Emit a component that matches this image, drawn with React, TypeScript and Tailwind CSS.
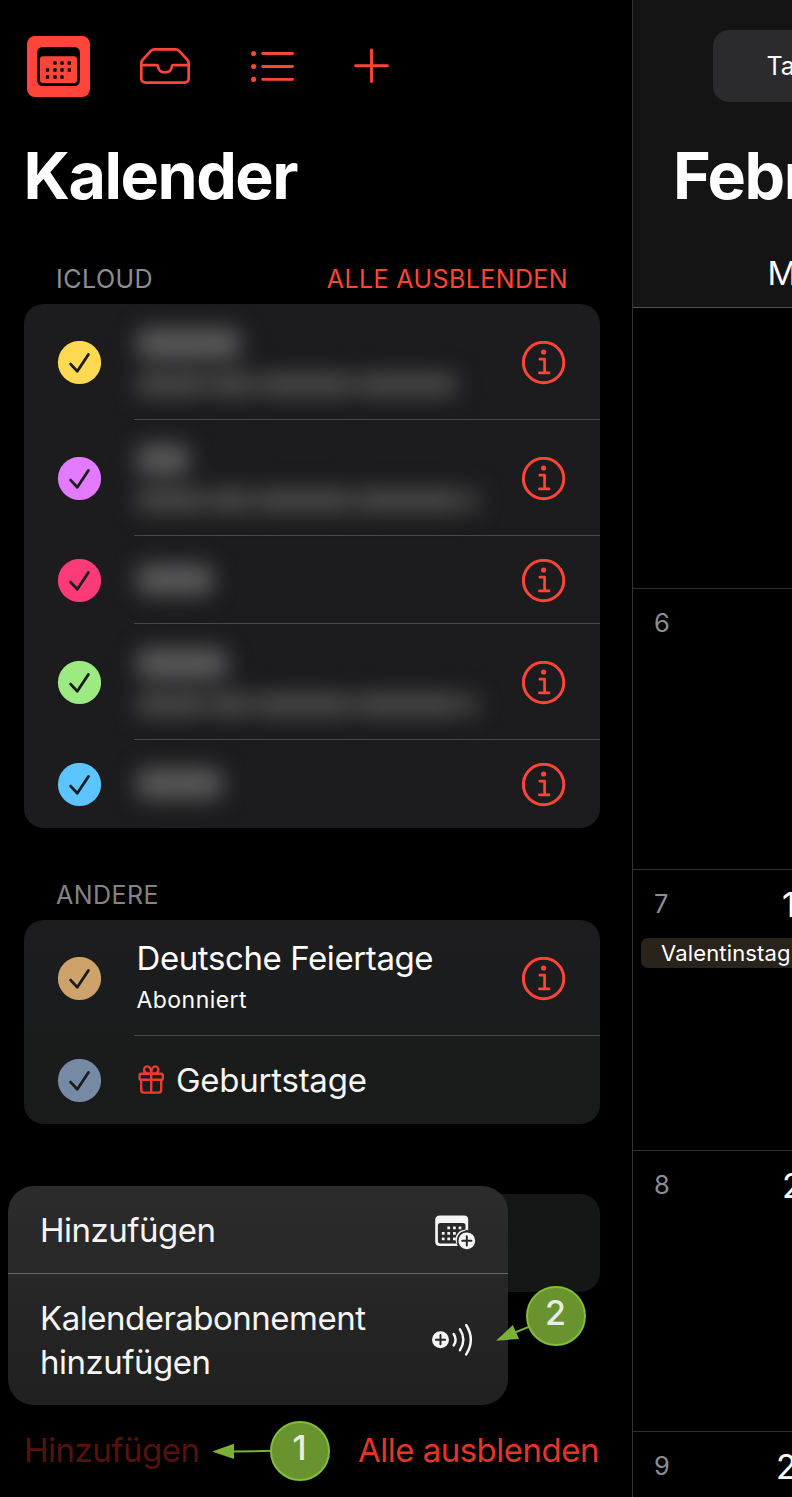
import React from "react";

type Entry = {
  color: string;
  tall: boolean;
  info: boolean;
  body: React.ReactNode;
};

function CheckCircle({ color }: { color: string }) {
  return (
    <svg width="44" height="44" viewBox="0 0 44 44" fill="none" className="shrink-0">
      <circle cx="22.5" cy="21.5" r="21.6" fill={color} />
      <path d="M13.6 23.1L20.3 30.3L31.4 13.4" stroke="#1c1c1e" strokeWidth="2.8" strokeLinecap="round" strokeLinejoin="round" />
    </svg>
  );
}

function InfoIcon() {
  return (
    <svg width="44" height="44" viewBox="0 0 44 44" fill="none" stroke="#ff453a" className="shrink-0">
      <circle cx="21.6" cy="21.5" r="20.2" strokeWidth="3" />
      <circle cx="21.6" cy="11" r="2.6" fill="#ff453a" stroke="none" />
      <path d="M17.8 18.2H22.6V31.9M17.4 31.9H27" strokeWidth="2.7" strokeLinecap="round" strokeLinejoin="round" />
    </svg>
  );
}

function CalendarFilledIcon() {
  const dots = [
    [28, 27], [35, 27], [42.3, 27],
    [20.5, 34], [28, 34], [35, 34], [42.3, 34],
    [20.5, 41], [28, 41], [35, 41],
  ];
  return (
    <svg width="63" height="61" viewBox="0 0 63 61">
      <rect width="63" height="61" rx="8" fill="#ff453a" />
      <rect x="10.2" y="11" width="42.7" height="39" rx="5.5" fill="#000" />
      <rect x="13" y="20.3" width="37" height="26.8" rx="3" fill="#ff453a" />
      {dots.map(([x, y], i) => (
        <rect key={i} x={x - 1.7} y={y - 1.7} width="3.4" height="3.4" rx="0.7" fill="#000" />
      ))}
    </svg>
  );
}

function InboxIcon() {
  return (
    <svg width="52" height="38" viewBox="0 0 52 38" fill="none" stroke="#ff453a" strokeWidth="2.7" strokeLinejoin="round">
      <path d="M2.3 16.3V31Q2.3 35.6 6.9 35.6H45.1Q49.7 35.6 49.7 31V16.3Q49.7 14.6 48.6 13.2L40.2 3.9Q38.6 2.3 36.4 2.3H15.6Q13.4 2.3 11.8 3.9L3.4 13.2Q2.3 14.6 2.3 16.3Z" />
      <path d="M2.3 18.1H17.6Q19 18.1 19.1 19.6C19.6 23.4 22.4 25.3 26 25.3S32.4 23.4 32.9 19.6Q33 18.1 34.4 18.1H49.7" />
    </svg>
  );
}

function ListIcon() {
  return (
    <svg width="44" height="34" viewBox="0 0 44 34" fill="#ff453a">
      {[4.5, 17.5, 30.4].map((y) => (
        <g key={y}>
          <circle cx="2.7" cy={y} r="2.6" />
          <rect x="10.3" y={y - 1.4} width="32.6" height="2.8" rx="1.4" />
        </g>
      ))}
    </svg>
  );
}

function PlusIcon() {
  return (
    <svg width="36" height="36" viewBox="0 0 36 36" stroke="#ff453a" strokeWidth="2.9" strokeLinecap="round">
      <path d="M17.5 1.9V33.6M1.6 17.7H33.4" />
    </svg>
  );
}

function GiftIcon() {
  return (
    <svg width="28" height="30" viewBox="0 0 28 30" fill="none" stroke="#ea3b31" strokeWidth="2.4" strokeLinejoin="round">
      <rect x="3.6" y="8.8" width="23.2" height="6" rx="1.6" />
      <path d="M5.2 15V25Q5.2 27.6 7.7 27.6H22.7Q25.2 27.6 25.2 25V15M15.2 8.8V27.6" />
      <path d="M15.2 8.6H11.8C6.8 8.2 7 1.4 11.1 1.4C13.8 1.4 15.2 4.6 15.2 8.6ZM15.2 8.6H18.6C23.6 8.2 23.4 1.4 19.3 1.4C16.6 1.4 15.2 4.6 15.2 8.6Z" />
    </svg>
  );
}

function CalendarAddIcon() {
  const dots = [
    [13.7, 12.8], [19.4, 12.8], [25, 12.8],
    [8.2, 18.4], [13.7, 18.4], [19.4, 18.4],
    [8.2, 23.9], [13.7, 23.9], [19.4, 23.9],
  ];
  return (
    <svg width="42" height="36" viewBox="0 0 42 36">
      <path fillRule="evenodd" fill="#f5f5f5" d="M5 0.4H29Q33.2 0.4 33.2 4.6V15.2A9.8 9.8 0 0 0 22.9 31H5Q0.2 31 0.2 26.5V5Q0.2 0.4 5 0.4ZM5.4 8Q2.9 8 2.9 10.6V25.8Q2.9 28.4 5.5 28.4H22.3A9.8 9.8 0 0 1 30.5 15.7V10.6Q30.5 8 28 8Z" />
      {dots.map(([x, y], i) => (
        <rect key={i} x={x - 1.4} y={y - 1.4} width="2.8" height="2.8" rx="0.5" fill="#f5f5f5" />
      ))}
      <circle cx="31.8" cy="25.8" r="8.4" fill="#f5f5f5" />
      <path d="M31.8 21.2V30.4M27.2 25.8H36.4" stroke="#272727" strokeWidth="2" strokeLinecap="round" />
    </svg>
  );
}

function SubscribeIcon() {
  return (
    <svg width="44" height="34" viewBox="0 0 44 34" fill="none" stroke="#f5f5f5" strokeWidth="2.5" strokeLinecap="round">
      <circle cx="8.5" cy="16.7" r="8.5" fill="#f5f5f5" stroke="none" />
      <path d="M8.5 12.1V21.3M3.9 16.7H13.1" stroke="#252525" strokeWidth="2" />
      <path d="M21.7 11Q25.5 16.7 21.7 22.4M28 6.4Q34.6 16.7 28 27.1M34.2 2Q43.4 16.7 34.2 31.4" />
    </svg>
  );
}

function Redacted({ title, words = [] }: { title: string; words?: string[] }) {
  return (
    <div className="flex flex-col gap-[14px] blur-[11px]">
      <div className={`h-[31px] rounded-xl bg-[#5a5a5b] ${title}`} />
      {words.length > 0 && (
        <div className="flex gap-[3px]">
          {words.map((w, i) => (
            <div key={i} className={`h-[23px] rounded-lg bg-[#4b4b4b] ${w}`} />
          ))}
        </div>
      )}
    </div>
  );
}

function Card({ rows, surface }: { rows: Entry[]; surface: string }) {
  return (
    <div className={`mr-8 ml-6 overflow-hidden rounded-[20px] ${surface}`}>
      {rows.map((row, i) => (
        <div key={i} className={`flex pl-[33px] ${row.tall ? "h-[116px]" : "h-[88px]"}`}>
          <div className="flex w-[77px] shrink-0 items-center pt-px">
            <CheckCircle color={row.color} />
          </div>
          <div className={`flex flex-1 items-center justify-between pr-[34px] pl-0.5 ${i < rows.length - 1 ? "border-b border-[#48484a]" : "pb-px"}`}>
            {row.body}
            {row.info && (
              <div className="pt-0.5">
                <InfoIcon />
              </div>
            )}
          </div>
        </div>
      ))}
    </div>
  );
}

const icloud: Entry[] = [
  { color: "#ffd952", tall: true, info: true, body: <Redacted title="w-[105px]" words={["w-[70px]", "w-[47px]", "w-[95px]", "w-[100px]"]} /> },
  { color: "#e27bff", tall: true, info: true, body: <Redacted title="w-[54px]" words={["w-[70px]", "w-[43px]", "w-[97px]", "w-[106px]", "w-[14px]"]} /> },
  { color: "#ff3a78", tall: false, info: true, body: <Redacted title="w-[78px]" /> },
  { color: "#9eea82", tall: true, info: true, body: <Redacted title="w-[92px]" words={["w-[70px]", "w-[43px]", "w-[97px]", "w-[106px]", "w-[14px]"]} /> },
  { color: "#5cc5ff", tall: false, info: true, body: <Redacted title="w-[87px]" /> },
];

const others: Entry[] = [
  {
    color: "#cda36b",
    tall: true,
    info: true,
    body: (
      <div className="flex flex-col pl-[0.5px]">
        <span className="text-[33px] leading-[44px] tracking-[-0.4px]">Deutsche Feiertage</span>
        <span className="text-[23px] leading-[40px] tracking-[0.45px]">Abonniert</span>
      </div>
    ),
  },
  {
    color: "#778aa5",
    tall: false,
    info: false,
    body: (
      <div className="flex items-center gap-3 text-[#f5f5f5]">
        <GiftIcon />
        <span className="text-[33px] leading-[44px] tracking-[-0.25px]">Geburtstage</span>
      </div>
    ),
  },
];

function Sidebar() {
  return (
    <aside className="relative flex h-full w-[633px] shrink-0 flex-col border-r border-[#333335] bg-black">
      <nav className="flex h-[133px] items-center pl-[27px]">
        <CalendarFilledIcon />
        <div className="ml-[49px] pb-0.5"><InboxIcon /></div>
        <div className="ml-[60px] pb-0.5"><ListIcon /></div>
        <div className="ml-[59px] pb-px"><PlusIcon /></div>
      </nav>
      <h1 className="mt-[3px] pl-[23.5px] text-[64.5px] leading-[80px] font-bold tracking-[-1.45px]">Kalender</h1>
      <div className="mt-[43px] flex h-[45px] items-center justify-between pb-[5px] pr-[64px] pl-[56px] text-[25px] leading-[32px]">
        <span className="tracking-[0.5px] text-[#8d8d93]">ICLOUD</span>
        <span className="tracking-[0.4px] text-[#ff453a]">ALLE AUSBLENDEN</span>
      </div>
      <Card rows={icloud} surface="bg-[#1c1c1e]" />
      <div className="flex h-[92px] items-center pt-[42px] pl-[56px] text-[25px] leading-[32px] tracking-[0.45px] text-[#838388]">ANDERE</div>
      <Card rows={others} surface="bg-linear-to-b from-[#1d1d1f] to-[#191b1a]" />
      <div className="mt-[70px] mr-8 ml-6 h-[98px] rounded-[20px] bg-[#151716]" />
      <div className="mt-auto flex h-[94px] items-center justify-between pr-[33px] pl-6 text-[33px] leading-[44px] tracking-[-0.5px]">
        <span className="text-[#56130e]">Hinzufügen</span>
        <span className="text-[#e4352b]">Alle ausblenden</span>
      </div>
      <div className="absolute top-[1186px] left-2 flex w-[500px] flex-col overflow-hidden rounded-[26px] bg-linear-to-b from-[#2d2c2c] to-[#202020] text-[33px] leading-[44px] tracking-[-0.5px] text-[#f5f5f5]">
        <div className="flex h-[88px] items-center justify-between border-b border-[#686868] pr-[31px] pl-8">
          <span>Hinzufügen</span>
          <div className="pt-[7px]"><CalendarAddIcon /></div>
        </div>
        <div className="flex h-[131px] justify-between pt-[22px] pr-8 pl-8">
          <span className="w-[360px]">Kalenderabonnement hinzufügen</span>
          <div className="pt-[27px]"><SubscribeIcon /></div>
        </div>
      </div>
    </aside>
  );
}

const weeks = [
  { nr: "", day: "" },
  { nr: "6", day: "" },
  { nr: "7", day: "14", event: "Valentinstag" },
  { nr: "8", day: "21" },
  { nr: "9", day: "28" },
];

function Month() {
  return (
    <main className="h-full w-[159px] shrink-0 overflow-hidden bg-black whitespace-nowrap">
      <header className="flex h-[308px] flex-col border-b border-[#505052] bg-[#141414]">
        <div className="mt-[30px] ml-[80px] flex h-[72px] w-[200px] items-center rounded-[16px] bg-[#2b2b2d] pt-0.5 pl-[53.5px] text-[25px]">Tag</div>
        <div className="mt-[34px] pl-[40px] text-[64.5px] leading-[80px] font-bold tracking-[-1.45px]">Februar</div>
        <div className="mt-[35px] pl-[134.5px] text-[33px] leading-[44px]">Mo</div>
      </header>
      {weeks.map((w, i) => (
        <section key={i} className="h-[281px] w-[300px] border-b border-[#303032]">
          <div className="flex h-[68px] items-center justify-between pr-[107px] pl-[21px]">
            <span className="w-5 text-[25.5px] text-[#8d8d93]">{w.nr}</span>
            <span className={`text-[34px] ${w.nr === "9" ? "w-[50px]" : "w-[44px]"}`}>{w.day}</span>
          </div>
          {w.event && (
            <div className="ml-2 h-[30px] rounded-[7px] bg-[#29231b] pl-[20px] text-[22px] leading-[30px] tracking-[0.15px]">{w.event}</div>
          )}
        </section>
      ))}
    </main>
  );
}

function Marker({ nr, place }: { nr: string; place: string }) {
  return (
    <div className={`absolute flex size-[60px] justify-center rounded-full border-2 border-[#83bd39] bg-[#68932f] pr-px text-[34px] leading-[49px] font-medium text-[#e8eee0] ${place}`}>
      {nr}
    </div>
  );
}

export default function App() {
  return (
    <div className="relative flex h-[1497px] w-[792px] overflow-hidden bg-black font-['Inter',sans-serif] text-white">
      <Sidebar />
      <Month />
      <svg className="absolute top-[1300px] left-[200px]" width="340" height="170" viewBox="200 1300 340 170" fill="#7bb135" stroke="none">
        <path d="M212 1451.5L234 1443.7V1459Z" />
        <path d="M233 1451.6L272 1450.8" stroke="#7bb135" strokeWidth="2" />
        <path d="M496 1340.8L512.8 1325L519 1339Z" />
        <path d="M515 1332.5L530 1326.3" stroke="#7bb135" strokeWidth="2" />
      </svg>
      <Marker nr="1" place="top-[1421px] left-[270px]" />
      <Marker nr="2" place="top-[1286px] left-[526px]" />
    </div>
  );
}
